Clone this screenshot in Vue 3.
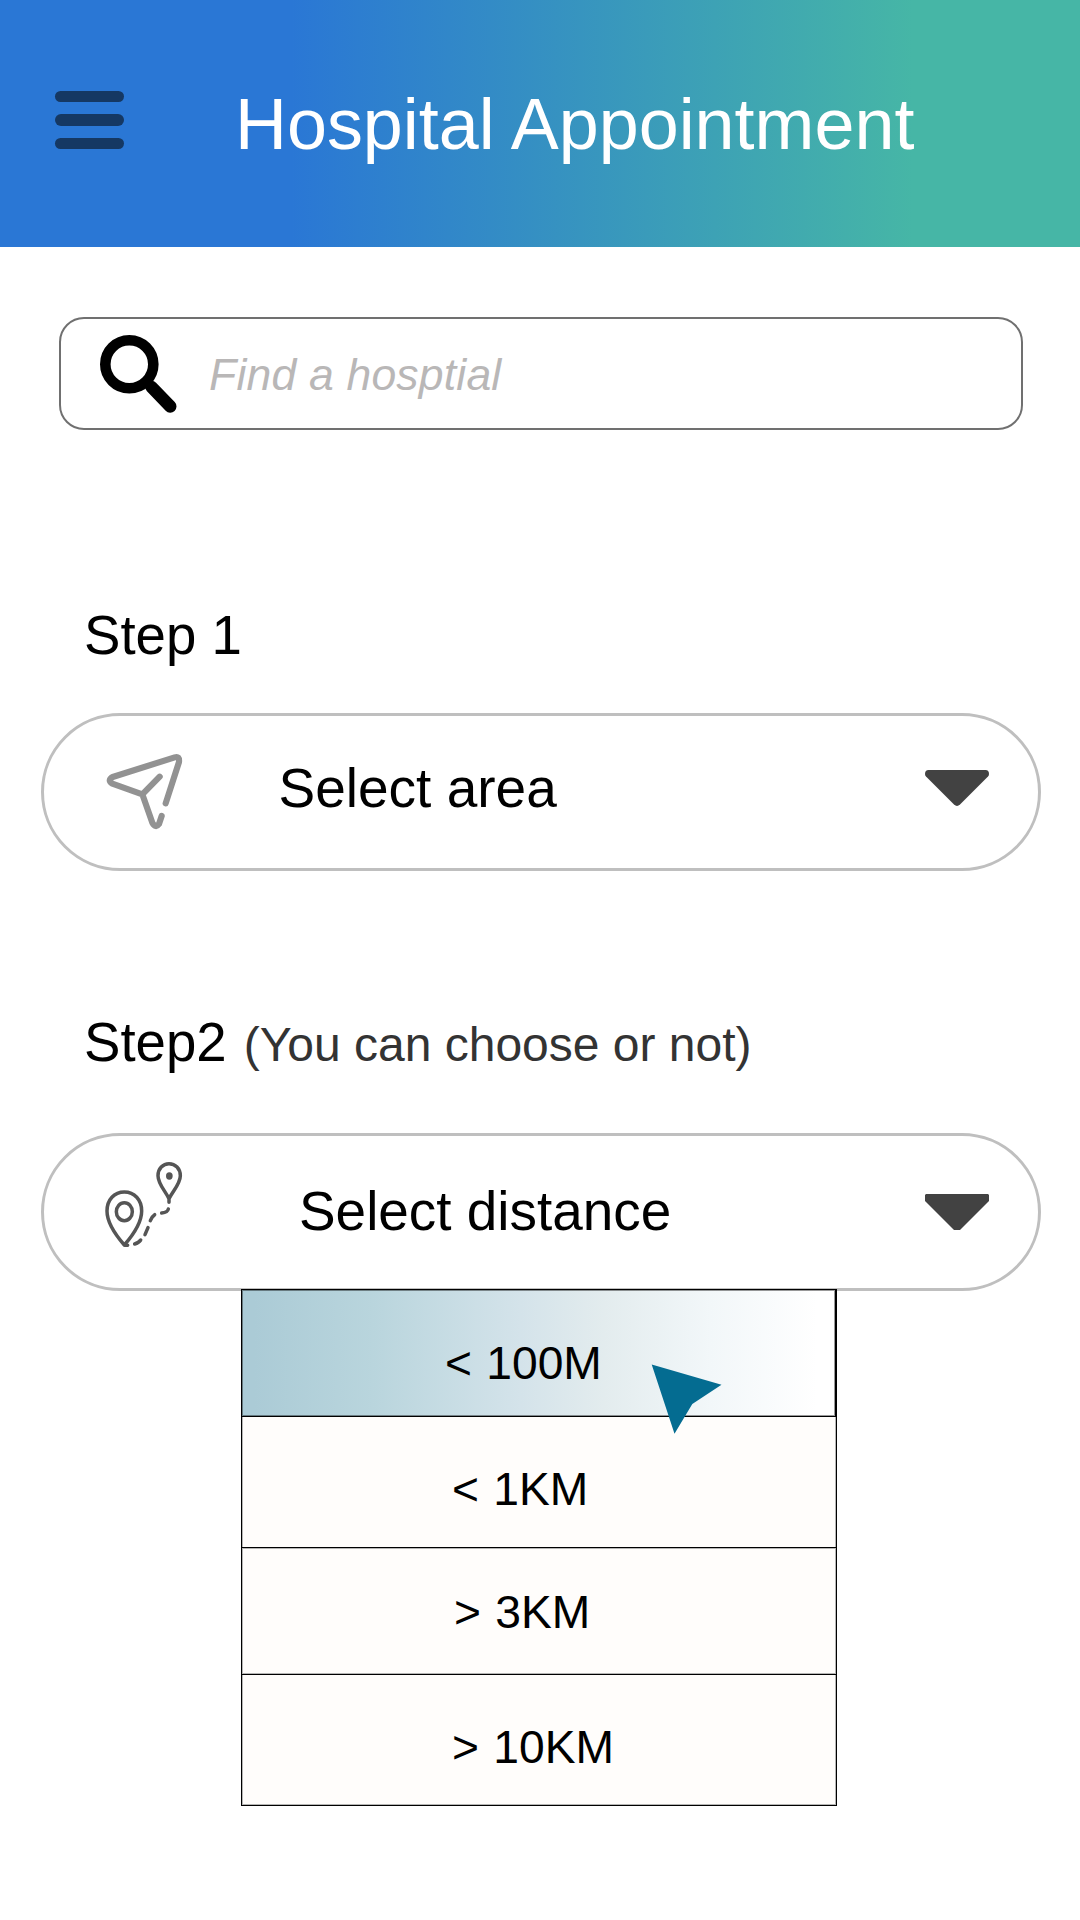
<script setup>
const options = [
  { label: '< 100M', key: 'r100m', active: true },
  { label: '< 1KM', key: 'r1km' },
  { label: '> 3KM', key: 'r3km' },
  { label: '> 10KM', key: 'r10km' },
]
</script>

<template>
  <div class="screen">
    <header class="header">
      <button class="menu" aria-label="Menu"><i></i><i></i><i></i></button>
      <h1 class="title">Hospital Appointment</h1>
    </header>

    <main>
      <div class="search">
        <svg class="search-icon" width="80" height="84" viewBox="0 0 80 84" fill="none" stroke="#000">
          <circle cx="30.300" cy="31.2" r="24" stroke-width="10.6" />
          <path d="M52.500 54 L71.200 73.4" stroke-width="12.6" stroke-linecap="round" />
        </svg>
        <span class="placeholder">Find a hosptial</span>
      </div>

      <h2 class="step step-one">Step 1</h2>
      <div class="select area">
        <svg class="icon" width="140" height="130" viewBox="0 0 420 390" fill="none" stroke="#929292" stroke-width="18.500" stroke-linecap="round" stroke-linejoin="round">
          <path d="M257 250 L297 126 Q299 107 284 112 L98 171 Q81 181 97 191 L187 223 L217 308 Q227 326 237 312 L245 288 M187 223 L239 170" />
        </svg>
        <span class="select-label">Select area</span>
        <svg class="arrow" width="64" height="36" viewBox="0 0 64 36" fill="#424242">
          <path d="M3.5 0 H60.500 Q64 0 64 4 Q64 5.500 63 6.500 L35 34.500 Q32 37.300 29 34.500 L1 6.500 Q0 5.500 0 4 Q0 0 3.500 0 Z" />
        </svg>
      </div>

      <div class="step step-two">
        <h2>Step2</h2>
        <span class="note">(You can choose or not)</span>
      </div>
      <div class="select distance">
        <svg class="icon" width="140" height="130" viewBox="0 0 420 390" fill="none" stroke="#555" stroke-width="10.500" stroke-linecap="round" stroke-linejoin="round">
          <path d="M133 315 C112 291 81 250 81 213 C81 179 103 156 133 156 C163 156 185 179 185 213 C185 250 154 291 133 315 Z" />
          <ellipse cx="133" cy="215" rx="24" ry="27" />
          <path d="M267 176 C255 152 234 131 234 107 C234 86 249 71 267 71 C286 71 301 86 301 107 C301 131 279 152 267 176 V187" />
          <ellipse cx="268" cy="108" rx="10" ry="11" fill="#555" stroke="none" />
          <path d="M135 316 H143 M164 312 Q177 308 182 300 M195 284 L204 263 M211 242 Q216 229 224 224 M245 219 Q263 217 265 207" />
        </svg>
        <span class="select-label">Select distance</span>
        <svg class="arrow" width="64" height="36" viewBox="0 0 64 36" fill="#424242">
          <path d="M1 0 H63 L64 1 V7 L35 36 H29 L0 7 V1 Z" />
        </svg>
      </div>

      <ul class="options">
        <li v-for="o in options" :key="o.key" class="option" :class="[o.key, { active: o.active }]">
          <span>{{ o.label }}</span>
        </li>
        <svg class="cursor" width="72" height="72" viewBox="0 0 72 72">
          <path d="M.7 .5 L70.500 20.700 L41.300 40 L23.500 69.800 Z" fill="#046c91" />
        </svg>
      </ul>
    </main>
  </div>
</template>

<style>
body {
  background: #fff;
}
</style>

<style scoped>
.screen {
  width: 1080px;
  height: 1920px;
  overflow: hidden;
  background: #fff;
  color: #000;
  font-family: "Liberation Sans", Arial, sans-serif;
}
h1, h2, ul {
  margin: 0;
  padding: 0;
  font-weight: 400;
  font-size: inherit;
  list-style: none;
}
.header {
  display: flex;
  align-items: center;
  height: 247px;
  background: linear-gradient(90deg, #2a77d5 27%, #46b6a6 84.500%);
}
.menu {
  display: flex;
  flex-direction: column;
  gap: 12px;
  width: 69px;
  margin: 0 0 7px 55px;
  padding: 0;
  border: 0;
  background: none;
}
.menu i {
  height: 11.300px;
  border-radius: 6px;
  background: #153863;
}
.title {
  margin-left: 111px;
  padding-top: 1px;
  color: #fff;
  font-size: 71.900px;
  line-height: 80px;
  white-space: nowrap;
}
.search {
  display: flex;
  box-sizing: border-box;
  width: 964px;
  height: 113px;
  margin: 70px 0 0 59px;
  border: 2.500px solid #707070;
  border-radius: 25px;
}
.search-icon {
  margin: 14px 0 0 38px;
}
.placeholder {
  margin-left: 30px;
  padding-top: 1px;
  color: #b9b7b7;
  font-size: 44.500px;
  font-style: italic;
  line-height: 109px;
  letter-spacing: 0.200px;
}
.step {
  height: 60px;
  margin-left: 84px;
  font-size: 54.600px;
  line-height: 62px;
}
.step-one {
  margin-top: 175px;
}
.step-two {
  display: flex;
  align-items: baseline;
  margin-top: 141px;
}
.note {
  margin-left: 17px;
  color: #333;
  font-size: 48px;
}
.select {
  display: flex;
  align-items: flex-start;
  box-sizing: border-box;
  width: 1000px;
  height: 158px;
  margin-left: 41px;
  border: 3px solid #bfbfbf;
  border-radius: 79px;
}
.area {
  margin-top: 48px;
}
.distance {
  margin-top: 61px;
}
.icon {
  margin: 4px 0 0 36px;
}
.select-label {
  margin: 42px 0 0 58.500px;
  font-size: 55px;
  line-height: 60px;
}
.distance .select-label {
  margin: 45px 0 0 79px;
  font-size: 54.900px;
}
.arrow {
  margin: 54px 49px 0 auto;
}
.distance .arrow {
  margin-top: 58px;
}
.options {
  position: relative;
  box-sizing: border-box;
  width: 596px;
  margin: -2px 0 0 241px;
  border: 1px solid #000;
  background: #fffdfb;
}
.option {
  box-sizing: border-box;
  height: 131px;
  border-bottom: 1px solid #000;
  box-shadow: inset 1px 0 #b5b5b4, inset -1px 0 #b5b5b4;
  font-size: 46.200px;
  line-height: 54px;
  word-spacing: 1.500px;
}
.r10km {
  border-bottom: 0;
}
.r100m {
  height: 127px;
  padding: 46px 0 0 203px;
}
.r1km {
  padding: 45px 0 0 210px;
}
.r3km {
  height: 127px;
  padding: 37px 0 0 212px;
  box-shadow: inset 1px 0 #b5b5b4, inset -1px 0 #b5b5b4, inset 0 1px #b5b5b4, inset 0 -1px #b5b5b4;
}
.r10km {
  height: 130px;
  padding: 45px 0 0 210px;
  box-shadow: inset 1px 0 #b5b5b4, inset -1px 0 #b5b5b4, inset 0 -1px #b5b5b4;
}
.active {
  border-right: 1px solid #000;
  background: linear-gradient(90deg, #abcbd6 2%, #b9d5dd 22%, #d4e3ea 47%, #e3ecee 61%, #f2f7f9 79%, #fff 97%);
  box-shadow: inset 0 0 0 1px rgba(0, 0, 0, 0.4);
}
.cursor {
  position: absolute;
  left: 409px;
  top: 74px;
}
</style>
